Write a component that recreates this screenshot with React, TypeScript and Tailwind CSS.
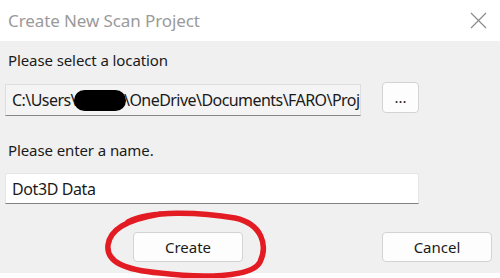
export default function App() {
  return (
    <div className="relative w-[500px] h-[278px] overflow-hidden bg-white font-['Noto_Sans',sans-serif] text-[#1a1a1a]">
      <div className="flex h-[41px] items-center justify-between pl-[8px] pr-[13px]">
        <span className="text-[17px] tracking-[-0.1px] text-[#9a9a9a]">Create New Scan Project</span>
        <svg width="17" height="17" viewBox="0 0 17 17" className="text-[#8a8a8a]">
          <path d="M1 1 L16 16 M16 1 L1 16" stroke="currentColor" strokeWidth="1.2" fill="none" />
        </svg>
      </div>

      <div className="flex h-[232px] flex-col bg-[#f0f0f0] px-[5px]">
        <div className="mt-[9px] h-[20px] pl-[3px] text-[15px] leading-[20px] tracking-[-0.1px]">Please select a location</div>

        <div className="mt-[14px] flex items-start">
          <div className="flex h-[32px] w-[356px] items-center overflow-hidden whitespace-nowrap border border-[#dedede] border-b-[#868686] bg-[#f4f4f4] pl-[6px] text-[16px] tracking-[-0.55px]">
            <span>C:\Users\</span>
            <span className="mx-[-2px] inline-block h-[21px] w-[52px] shrink-0 rounded-full bg-black" />
            <span>\OneDrive\Documents\FARO\Projects</span>
          </div>
          <button className="ml-[21px] mt-[-2px] flex h-[31px] w-[37px] items-center justify-center rounded-[4px] border border-[#d3d3d3] bg-[#fdfdfd] text-[15px]">
            ...
          </button>
        </div>

        <div className="mt-[24px] h-[20px] pl-[3px] text-[15px] leading-[20px] tracking-[-0.1px]">Please enter a name.</div>

        <div className="mt-[13px] flex h-[31px] w-[414px] items-center border border-[#e6e6e6] border-b-[#808080] bg-white pl-[6px] text-[16px] tracking-[-0.4px]">
          Dot3D Data
        </div>

        <div className="mt-[28px] flex">
          <button className="ml-[128px] h-[30px] w-[110px] rounded-[4px] border border-[#d3d3d3] bg-[#fdfdfd] text-[15px]">
            Create
          </button>
          <button className="ml-[139px] h-[30px] w-[110px] rounded-[4px] border border-[#d3d3d3] bg-[#fdfdfd] text-[15px]">
            Cancel
          </button>
        </div>
      </div>

      <svg className="pointer-events-none absolute inset-0" width="500" height="278" viewBox="0 0 500 278">
        <path
          d="M128 222 C150 210, 200 212, 235 218 C262 224, 268 245, 260 262 C252 278, 200 278, 160 273 C125 270, 106 262, 108 245 C110 230, 125 220, 160 214"
          stroke="#e31b23"
          strokeWidth="5.5"
          strokeLinecap="round"
          fill="none"
        />
      </svg>
    </div>
  );
}
